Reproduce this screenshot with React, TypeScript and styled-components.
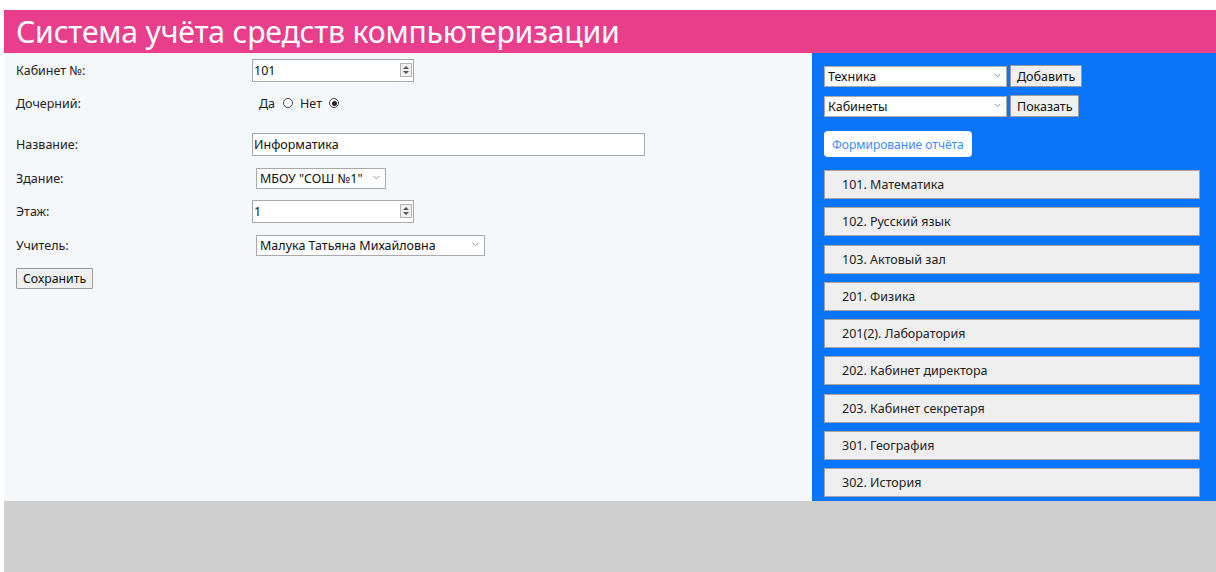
import React from 'react';
import styled, { createGlobalStyle } from 'styled-components';

const GlobalStyle = createGlobalStyle`
  html, body {
    margin: 0;
    padding: 0;
    background: #fff;
  }
  body {
    font-family: "Noto Sans", "Open Sans", sans-serif;
    font-size: 13px;
    color: #222;
  }
  * {
    box-sizing: border-box;
  }
`;

const rooms = [
  '101. Математика',
  '102. Русский язык',
  '103. Актовый зал',
  '201. Физика',
  '201(2). Лаборатория',
  '202. Кабинет директора',
  '203. Кабинет секретаря',
  '301. География',
  '302. История',
];

const Page = styled.div`
  padding: 10px 0 0 4px;
  height: 572px;
  overflow: hidden;
`;

const Shell = styled.div`
  background: #cecece;
  height: 100%;
`;

const Header = styled.h1`
  margin: 0;
  height: 43px;
  background: #e83e8c;
  color: #fff;
  font-weight: 400;
  font-size: 30.2px;
  line-height: 43px;
  padding-left: 12px;
  letter-spacing: -0.2px;
`;

const Main = styled.div`
  display: flex;
  height: 448px;
`;

const FormPanel = styled.div`
  width: 808px;
  background: #f5f8fa;
  padding: 5px 0 0 12px;
`;

const Row = styled.div<{ h: number }>`
  display: grid;
  grid-template-columns: 236px 1fr;
  align-items: center;
  height: ${p => p.h}px;
`;

const Label = styled.label`
  font-size: 12.5px;
  color: #222;
`;

const Field = styled.div<{ w: number; shift?: number }>`
  position: relative;
  width: ${p => p.w}px;
  margin-left: ${p => p.shift || 0}px;
`;

const TextInput = styled.input`
  width: 100%;
  height: 23px;
  border: 1px solid #a9a9a9;
  background: #fff;
  font: inherit;
  font-size: 12.5px;
  padding: 0 1px;
  color: #111;
  outline: none;
  &::-webkit-inner-spin-button,
  &::-webkit-outer-spin-button {
    -webkit-appearance: none;
    margin: 0;
  }
`;

const Spinner = styled.span`
  position: absolute;
  right: 2px;
  top: 4px;
  width: 12px;
  height: 14px;
  border: 1px solid #b5b5b5;
  background: #f0f0f0;
  display: flex;
  align-items: center;
  justify-content: center;
`;

const Select = styled.select<{ h?: number }>`
  width: 100%;
  height: ${p => p.h || 21}px;
  appearance: none;
  border: 1px solid #a9a9a9;
  background: #fff;
  font: inherit;
  font-size: 12.5px;
  padding: 0 3px;
  color: #111;
  outline: none;
`;

const Chevron = styled.svg`
  position: absolute;
  right: 6px;
  top: 50%;
  margin-top: -3px;
  pointer-events: none;
`;

const RadioGroup = styled.div`
  display: flex;
  align-items: center;
  gap: 7.5px;
  padding-left: 7px;
  font-size: 12.5px;
`;

const Radio = styled.input`
  appearance: none;
  width: 10px;
  height: 10px;
  margin: 0;
  border: 1px solid #444;
  border-radius: 50%;
  background: #fff;
  position: relative;
  &:checked::after {
    content: '';
    position: absolute;
    inset: 1.5px;
    border-radius: 50%;
    background: #222;
  }
`;

const Button = styled.button`
  justify-self: start;
  height: 22px;
  padding: 0 6px;
  border: 1px solid #9a9a9a;
  background: #efefef;
  font: inherit;
  font-size: 12.5px;
  color: #111;
  border-radius: 1px;
`;

const SaveButton = styled(Button)`
  margin-top: 9px;
  height: 21px;
  padding: 0 6px;
  font-size: 12.3px;
`;

const SidePanel = styled.div`
  flex: 1;
  background: #0a74fb;
  padding: 12px 16px 0 12px;
  display: flex;
  flex-direction: column;
`;

const ToolRow = styled.div`
  display: flex;
  align-items: center;
  gap: 3px;
  margin-bottom: 8px;
`;

const ReportButton = styled.button`
  align-self: flex-start;
  margin-top: 6px;
  height: 26px;
  padding: 0 8px;
  border: none;
  border-radius: 4px;
  background: #fff;
  color: #3d8bfd;
  font: inherit;
  font-size: 12px;
`;

const RoomList = styled.div`
  display: flex;
  flex-direction: column;
  gap: 8.25px;
  margin-top: 13px;
`;

const RoomItem = styled.div`
  height: 29px;
  flex-shrink: 0;
  display: flex;
  align-items: center;
  padding-left: 17px;
  background: #efefef;
  border: 1px solid #a4a4a4;
  font-size: 12.5px;
  color: #222;
`;

const SpinIcon = () => (
  <Spinner>
    <svg width="6" height="10" viewBox="0 0 6 10">
      <path d="M0 4 L3 1 L6 4 Z M0 6 L3 9 L6 6 Z" fill="#555" />
    </svg>
  </Spinner>
);

const Arrow = () => (
  <Chevron width="7" height="5" viewBox="0 0 7 5">
    <path d="M0.5 0.8 L3.5 3.8 L6.5 0.8" fill="none" stroke="#888" strokeWidth="0.9" />
  </Chevron>
);

const App: React.FC = () => {
  return (
    <Page>
      <GlobalStyle />
      <Shell>
        <Header>Система учёта средств компьютеризации</Header>
        <Main>
          <FormPanel>
            <Row h={25}>
              <Label>Кабинет №:</Label>
              <Field w={162}>
                <TextInput type="number" defaultValue={101} />
                <SpinIcon />
              </Field>
            </Row>
            <Row h={40}>
              <Label>Дочерний:</Label>
              <RadioGroup>
                <span>Да</span>
                <Radio type="radio" name="child" />
                <span>Нет</span>
                <Radio type="radio" name="child" defaultChecked />
              </RadioGroup>
            </Row>
            <Row h={42}>
              <Label>Название:</Label>
              <Field w={393}>
                <TextInput defaultValue="Информатика" />
              </Field>
            </Row>
            <Row h={26}>
              <Label>Здание:</Label>
              <Field w={130} shift={4}>
                <Select defaultValue="1">
                  <option value="1">МБОУ "СОШ №1"</option>
                </Select>
                <Arrow />
              </Field>
            </Row>
            <Row h={40}>
              <Label>Этаж:</Label>
              <Field w={162}>
                <TextInput type="number" defaultValue={1} />
                <SpinIcon />
              </Field>
            </Row>
            <Row h={28}>
              <Label>Учитель:</Label>
              <Field w={229} shift={4}>
                <Select defaultValue="1">
                  <option value="1">Малука Татьяна Михайловна</option>
                </Select>
                <Arrow />
              </Field>
            </Row>
            <SaveButton>Сохранить</SaveButton>
          </FormPanel>
          <SidePanel>
            <ToolRow>
              <Field w={183}>
                <Select defaultValue="tech">
                  <option value="tech">Техника</option>
                </Select>
                <Arrow />
              </Field>
              <Button>Добавить</Button>
            </ToolRow>
            <ToolRow>
              <Field w={183}>
                <Select defaultValue="rooms">
                  <option value="rooms">Кабинеты</option>
                </Select>
                <Arrow />
              </Field>
              <Button>Показать</Button>
            </ToolRow>
            <ReportButton>Формирование отчёта</ReportButton>
            <RoomList>
              {rooms.map(r => (
                <RoomItem key={r}>{r}</RoomItem>
              ))}
            </RoomList>
          </SidePanel>
        </Main>
      </Shell>
    </Page>
  );
};

export default App;
